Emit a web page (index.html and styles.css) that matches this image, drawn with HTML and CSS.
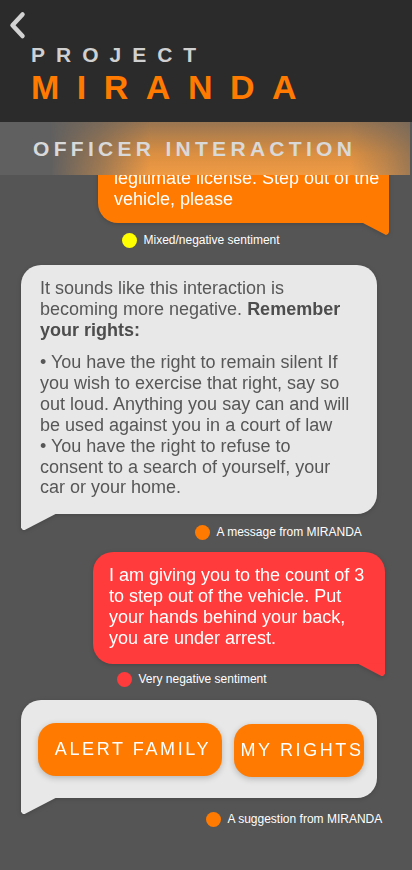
FILE: index.html
```html
<!DOCTYPE html>
<html lang="en">
<head>
<meta charset="utf-8">
<title>Project Miranda — Officer Interaction</title>
<link rel="stylesheet" href="styles.css">
</head>
<body>
<header class="app-header">
  <div class="brand">
    <button class="back-btn" aria-label="Back">
      <svg viewBox="0 0 24 32" width="24" height="32" aria-hidden="true"><path d="M16.5 4.5 L6.5 15.2 L16.5 26"/></svg>
    </button>
    <div class="brand-sub">PROJECT</div>
    <div class="brand-name">MIRANDA</div>
  </div>
  <div class="section-bar"><h1 class="section-title">OFFICER INTERACTION</h1></div>
</header>

<main class="chat">
  <div class="msg">
    <p class="bubble bubble--right bubble--orange">legitimate license. Step out of the vehicle, please</p>
    <div class="meta meta--o1"><span class="dot dot--yellow"></span>Mixed/negative sentiment</div>
  </div>

  <div class="msg">
    <div class="bubble bubble--left bubble--grey bubble--text">
      <p>It sounds like this interaction is becoming more negative. <strong>Remember your rights:</strong></p>
      <p>• You have the right to remain silent If you wish to exercise that right, say so out loud. Anything you say can and will be used against you in a court of law<br>• You have the right to refuse to consent to a search of yourself, your car or your home.</p>
    </div>
    <div class="meta meta--m1"><span class="dot dot--orange"></span>A message from MIRANDA</div>
  </div>

  <div class="msg">
    <p class="bubble bubble--right bubble--red">I am giving you to the count of 3 to step out of the vehicle. Put your hands behind your back, you are under arrest.</p>
    <div class="meta meta--o2"><span class="dot dot--red"></span>Very negative sentiment</div>
  </div>

  <div class="msg">
    <div class="bubble bubble--left bubble--grey bubble--actions">
      <button class="chip chip--wide">ALERT FAMILY</button>
      <button class="chip chip--narrow">MY RIGHTS</button>
    </div>
    <div class="meta meta--m2"><span class="dot dot--orange"></span>A suggestion from MIRANDA</div>
  </div>
</main>
</body>
</html>
```

FILE: styles.css
```css
* { box-sizing: border-box; }

html, body {
  margin: 0;
  padding: 0;
}

body {
  background: #555555;
  font-family: "Liberation Sans", Arial, sans-serif;
  min-height: 100vh;
}

/* ---------- header ---------- */
.app-header {
  position: fixed;
  top: 0;
  left: 0;
  right: 0;
  z-index: 10;
}

.brand {
  height: 122px;
  background: #2b2b2b;
  padding-top: 10px;
}

.back-btn {
  display: block;
  margin-left: 6px;
  width: 24px;
  height: 32px;
  padding: 0;
  border: 0;
  background: none;
}

.back-btn svg {
  display: block;
  fill: none;
  stroke: #d2d2d2;
  stroke-width: 4.5;
  stroke-linecap: round;
  stroke-linejoin: round;
}

.brand-sub {
  margin: 2px 0 0 31px;
  font-weight: 700;
  font-size: 21px;
  line-height: 21px;
  letter-spacing: 11px;
  color: #d0d0d0;
}

.brand-name {
  margin: 5px 0 0 31px;
  font-weight: 700;
  font-size: 34px;
  line-height: 34px;
  letter-spacing: 17.5px;
  color: #ff7a00;
}

/* frosted bar with the orange glow of the bubble scrolled beneath it */
.section-bar {
  position: relative;
  height: 53px;
  margin-right: 2px;
  display: flex;
  align-items: center;
  padding-left: 33px;
  background: #606060;
  overflow: hidden;
}

.section-bar::before {
  content: "";
  position: absolute;
  inset: 0;
  background: linear-gradient(to bottom, rgba(200, 135, 70, 0.55) 0%, rgba(232, 148, 62, 0.9) 60%, rgba(240, 155, 68, 1) 100%);
  -webkit-mask-image: linear-gradient(to right, transparent 50px, rgba(0, 0, 0, 0.45) 100px, #000 150px, #000 350px, rgba(0, 0, 0, 0.7) 385px, rgba(0, 0, 0, 0.45) 410px);
  mask-image: linear-gradient(to right, transparent 50px, rgba(0, 0, 0, 0.45) 100px, #000 150px, #000 350px, rgba(0, 0, 0, 0.7) 385px, rgba(0, 0, 0, 0.45) 410px);
}

.section-title {
  position: relative;
  margin: 0;
  font-weight: 700;
  font-size: 21px;
  letter-spacing: 4.3px;
  color: #d9d9d9;
}

/* ---------- chat ---------- */
.chat {
  padding: 136px 0 20px;
  display: flex;
  flex-direction: column;
}

.msg {
  display: flex;
  flex-direction: column;
  align-items: flex-start;
}

.bubble {
  position: relative;
  margin: 0;
  border-radius: 20px;
  filter: drop-shadow(0 1px 2px rgba(0, 0, 0, 0.18));
}

.bubble--right { border-bottom-right-radius: 0; }
.bubble--left { border-bottom-left-radius: 0; }

.bubble--right::after,
.bubble--left::after {
  content: "";
  position: absolute;
  top: calc(100% - 1px);
  background: inherit;
}

.bubble--right::after {
  right: 0;
  width: 28px;
  height: 13px;
  clip-path: polygon(0 0, 100% 0, 100% calc(100% - 3px), calc(100% - 1px) calc(100% - 1px), calc(100% - 3px) 100%);
}

.bubble--left::after {
  left: 0;
  width: 36px;
  height: 17px;
  clip-path: polygon(0 0, 100% 0, 3px 100%, 1px calc(100% - 1px), 0 calc(100% - 3px));
}

.bubble--orange {
  margin-left: 98px;
  width: 291px;
  padding: 32px 8px 13px 16px;
  background: #ff7a00;
  color: #ffffff;
  font-size: 18px;
  line-height: 21px;
}

.bubble--red {
  margin-top: 12px;
  margin-left: 93px;
  width: 292px;
  padding: 13px 12px 15px 16px;
  background: #ff3b3b;
  color: #ffffff;
  font-size: 18px;
  line-height: 21px;
}

.bubble--grey {
  margin-left: 21px;
  width: 356px;
  background: #e8e8e8;
}

.bubble--text {
  margin-top: 17px;
  padding: 13px 25px 16px 19px;
  color: #575757;
  font-size: 18px;
  line-height: 20.9px;
}

.bubble--text p { margin: 0; }
.bubble--text p + p { margin-top: 11.3px; }
.bubble--text strong { color: #4d4d4d; }

.bubble--actions {
  margin-top: 13px;
  display: flex;
  gap: 12px;
  padding: 23px 13px 21px 17px;
}

.chip {
  height: 53px;
  padding: 0 0 0 6px;
  border: 0;
  border-radius: 18px;
  background: #ff7a00;
  color: #ffffff;
  font-family: "Liberation Sans", Arial, sans-serif;
  font-size: 18px;
  letter-spacing: 2.6px;
  white-space: nowrap;
  box-shadow: 0 2px 6px rgba(0, 0, 0, 0.22);
}

.chip--wide { width: 184px; }
.chip--narrow { width: 130px; margin-top: 1px; }

/* ---------- meta rows ---------- */
.meta {
  display: flex;
  align-items: center;
  gap: 6.5px;
  height: 16px;
  font-size: 12px;
  color: #ffffff;
  white-space: nowrap;
}

.meta--o1 { margin: 9px 0 0 122px; }
.meta--m1 { margin: 10px 0 0 195px; }
.meta--o2 { margin: 7px 0 0 117px; }
.meta--m2 { margin: 13px 0 0 206px; }

.dot {
  width: 15px;
  height: 15px;
  border-radius: 50%;
  flex: none;
}

.dot--yellow { background: #ffff00; }
.dot--orange { background: #ff7a00; }
.dot--red { background: #ff3b3b; }
```
